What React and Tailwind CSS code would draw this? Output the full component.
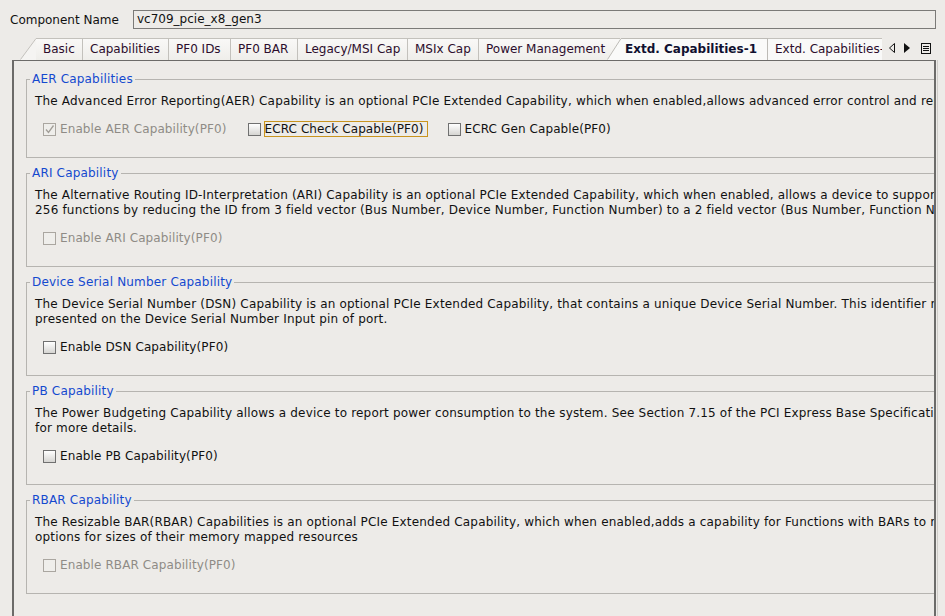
import clsx from 'clsx';

// tab widths measured from the reference strip
const tabs = [
  { label: 'Basic', w: 'w-[46px]', first: true },
  { label: 'Capabilities', w: 'w-[86px]' },
  { label: 'PF0 IDs', w: 'w-[62px]' },
  { label: 'PF0 BAR', w: 'w-[67px]' },
  { label: 'Legacy/MSI Cap', w: 'w-[110px]' },
  { label: 'MSIx Cap', w: 'w-[71px]' },
  { label: 'Power Management', w: 'w-[142px]' },
];

const groups = [
  {
    title: 'AER Capabilities',
    lines: [
      'The Advanced Error Reporting(AER) Capability is an optional PCIe Extended Capability, which when enabled,allows advanced error control and reporting.',
    ],
    boxes: [
      { label: 'Enable AER Capability(PF0)', checked: true, disabled: true },
      { label: 'ECRC Check Capable(PF0)', focused: true },
      { label: 'ECRC Gen Capable(PF0)' },
    ],
  },
  {
    title: 'ARI Capability',
    lines: [
      'The Alternative Routing ID-Interpretation (ARI) Capability is an optional PCIe Extended Capability, which when enabled, allows a device to support up to',
      '256 functions by reducing the ID from 3 field vector (Bus Number, Device Number, Function Number) to a 2 field vector (Bus Number, Function Number).',
    ],
    boxes: [{ label: 'Enable ARI Capability(PF0)', disabled: true }],
  },
  {
    title: 'Device Serial Number Capability',
    lines: [
      'The Device Serial Number (DSN) Capability is an optional PCIe Extended Capability, that contains a unique Device Serial Number. This identifier represents the value',
      'presented on the Device Serial Number Input pin of port.',
    ],
    boxes: [{ label: 'Enable DSN Capability(PF0)' }],
  },
  {
    title: 'PB Capability',
    lines: [
      'The Power Budgeting Capability allows a device to report power consumption to the system. See Section 7.15 of the PCI Express Base Specification',
      'for more details.',
    ],
    boxes: [{ label: 'Enable PB Capability(PF0)' }],
  },
  {
    title: 'RBAR Capability',
    lines: [
      'The Resizable BAR(RBAR) Capabilities is an optional PCIe Extended Capability, which when enabled,adds a capability for Functions with BARs to report various',
      'options for sizes of their memory mapped resources',
    ],
    boxes: [{ label: 'Enable RBAR Capability(PF0)', disabled: true }],
  },
];

function CheckBox({ label, checked, disabled, focused }) {
  return (
    <div className="flex items-center gap-[3px] h-[16px]">
      <span
        className={clsx(
          'w-[13px] h-[13px] border flex items-center justify-center',
          disabled ? 'border-[#aaa6a0] bg-[#efeeeb]' : 'border-[#707070] bg-linear-to-b from-[#ffffff] to-[#d6d5d2]'
        )}
      >
        {checked && (
          <svg width="11" height="11" viewBox="0 0 11 11">
            <path d="M2 5.5 L4.5 8.5 L9.5 1.5" fill="none" stroke="#a19d97" strokeWidth="1.3" />
          </svg>
        )}
      </span>
      <span
        className={clsx(
          'leading-[14px] whitespace-nowrap tracking-[0.1px]',
          disabled ? 'text-[#8f8b86]' : 'text-[#111]',
          focused ? 'border border-[#c8941f] pr-[3px]' : 'border border-transparent'
        )}
      >
        {label}
      </span>
    </div>
  );
}

function Group({ title, lines, boxes, first }) {
  return (
    <fieldset
      className={clsx('border border-[#b6b4b0] w-[1200px] pl-[8px] pt-[7px] pb-[20px]', first ? '' : 'mt-[8px]')}
    >
      <legend className="-ml-[5px] px-[2px] leading-[15px] text-[#1449cf]">{title}</legend>
      {lines.map((l) => (
        <div key={l} className="leading-[15px] whitespace-nowrap text-[#111]">
          {l}
        </div>
      ))}
      <div className="mt-[12px] ml-[8px] flex gap-[20px]">
        {boxes.map((b) => (
          <CheckBox key={b.label} {...b} />
        ))}
      </div>
    </fieldset>
  );
}

function Tab({ label, w, first }) {
  return (
    <div className="flex h-[22px] shrink-0">
      {first && (
        <svg width="16" height="22" viewBox="0 0 16 22" className="block">
          <polygon points="0,22 16,0 16,22" fill="#f5f4f2" />
          <line x1="0.5" y1="21.5" x2="16" y2="0.5" stroke="#c3c1bc" />
        </svg>
      )}
      <div
        className={clsx(
          'h-[22px] border-t border-[#c3c1bc] bg-linear-to-b from-[#f9f8f7] to-[#efeeea] pl-[7px] leading-[20px] text-[#2c0d2c] whitespace-nowrap tracking-normal',
          w,
          first ? '' : 'border-l'
        )}
      >
        {label}
      </div>
    </div>
  );
}

export default function App() {
  return (
    <div className="w-[945px] h-[616px] overflow-hidden bg-[#edebe8] font-['DejaVu_Sans',sans-serif] text-[12px] tracking-[0.18px] pt-[10px]">
      <div className="flex items-center h-[19px]">
        <div className="w-[133px] pl-[10px] text-[#111] tracking-normal">Component Name</div>
        <div className="w-[803px] h-[19px] border border-[#7b7a78] pl-[3px] leading-[17px] text-[#111] tracking-normal">
          vc709_pcie_x8_gen3
        </div>
      </div>

      <div className="mt-[9px] h-[22px] flex">
        <div className="ml-[20px] w-[862px] overflow-hidden flex">
          {tabs.map((t) => (
            <Tab key={t.label} {...t} />
          ))}
          <div className="relative z-10 flex h-[22px] shrink-0 -ml-[13px]">
            <svg width="14" height="22" viewBox="0 0 14 22" className="block">
              <polygon points="0,22 14,0 14,22" fill="#fafaf9" />
              <line x1="0.5" y1="21.5" x2="14" y2="0.5" stroke="#bdbbb6" />
            </svg>
            <div className="w-[147px] h-[22px] border-t border-r border-[#bdbbb6] bg-[#fafaf9] pl-[4px] leading-[20px] font-bold text-[#101030] whitespace-nowrap tracking-normal">
              Extd. Capabilities-1
            </div>
          </div>
          <div className="h-[22px] border-t border-[#c3c1bc] bg-[#f9f9f8] pl-[7px] pr-[7px] leading-[20px] text-[#2c0d2c] whitespace-nowrap shrink-0 tracking-normal">
            Extd. Capabilities-2
          </div>
        </div>
        <div className="flex items-center gap-[9px] pl-[7px] h-[20px]">
          <svg width="6" height="10" viewBox="0 0 6 10">
            <polygon points="5.5,0.5 5.5,9.5 0.5,5" fill="none" stroke="#111" />
          </svg>
          <svg width="6" height="10" viewBox="0 0 6 10">
            <polygon points="0,0 0,10 6,5" fill="#111" />
          </svg>
          <svg width="10" height="11" viewBox="0 0 10 11" className="ml-[2px]">
            <rect x="0.5" y="0.5" width="9" height="10" fill="none" stroke="#111" />
            <line x1="2" y1="3.5" x2="8" y2="3.5" stroke="#111" />
            <line x1="2" y1="5.5" x2="8" y2="5.5" stroke="#111" />
            <line x1="2" y1="7.5" x2="8" y2="7.5" stroke="#111" />
          </svg>
        </div>
      </div>

      <div className="ml-[12px] w-[926px] h-[600px] border-r border-[#cfcdc9]">
        <div className="w-[924px] h-[600px] border-l-2 border-t border-r-2 border-[#6c6b69] overflow-hidden pl-[12px] pt-[11px]">
          {groups.map((g, i) => (
            <Group key={g.title} {...g} first={i === 0} />
          ))}
        </div>
      </div>
    </div>
  );
}
